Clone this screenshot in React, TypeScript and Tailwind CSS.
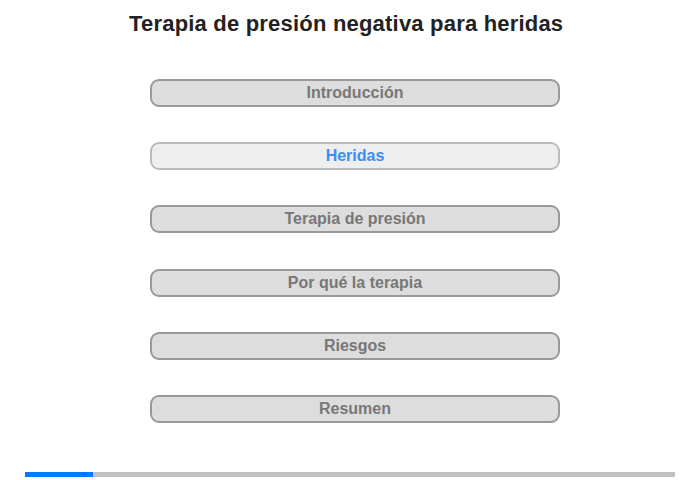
import React from 'react';

const sections = [
  'Introducción',
  'Heridas',
  'Terapia de presión',
  'Por qué la terapia',
  'Riesgos',
  'Resumen',
];

export default function App() {
  const active = 1;
  const progress = 10.5;

  return (
    <div className="w-[700px] h-[480px] bg-white font-['Liberation_Sans',Arial,sans-serif] relative">
      <h1 className="pt-[11px] pl-[129px] text-[22px] leading-[26px] tracking-[0.2px] font-bold text-[#222]">
        Terapia de presión negativa para heridas
      </h1>

      <div className="mt-[42px] ml-[150px] w-[410px] flex flex-col gap-[35.2px]">
        {sections.map((s, i) => (
          <button
            key={s}
            className={`h-[28px] w-full rounded-[9px] border-2 text-[16px] font-bold leading-none ${
              i === active
                ? 'bg-[#eeeeee] border-[#bbbbbb] text-[#3b8cf5]'
                : 'bg-[#dddddd] border-[#999999] text-[#777777]'
            }`}
          >
            {s}
          </button>
        ))}
      </div>

      <div className="absolute left-[25px] top-[472px] w-[650px] h-[5px] bg-[#c0c0c0]">
        <div className="h-full bg-[#007bff]" style={{ width: `${progress}%` }} />
      </div>
    </div>
  );
}
